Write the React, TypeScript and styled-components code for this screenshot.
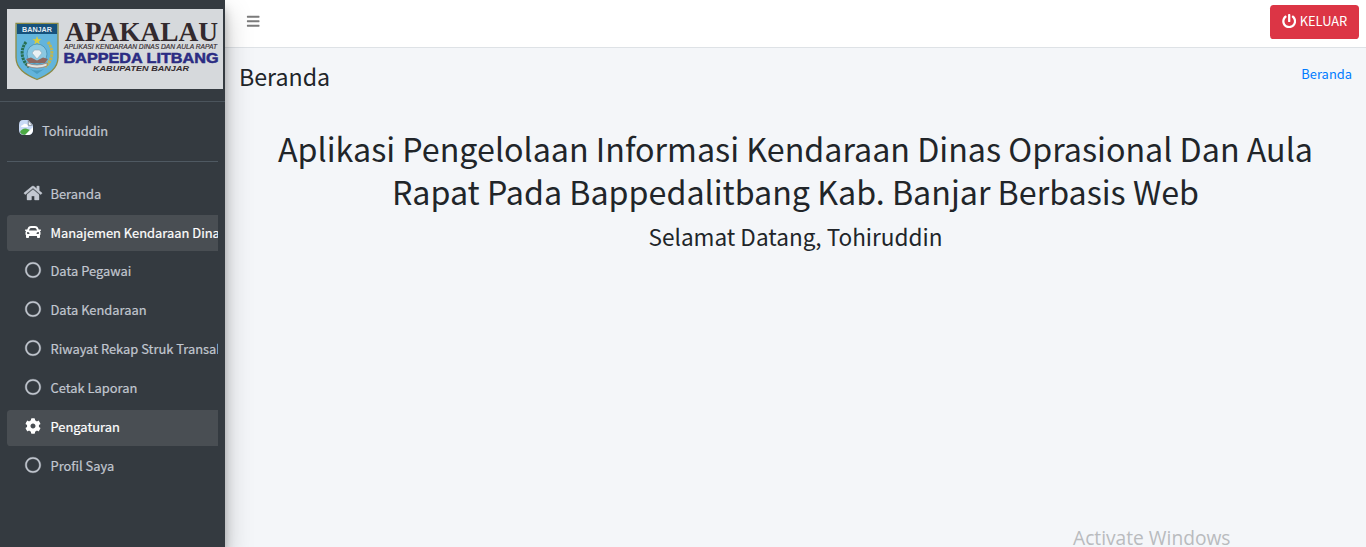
import React from 'react';
import styled, { createGlobalStyle, css } from 'styled-components';
import { FaHome, FaCar, FaCog, FaPowerOff, FaBars, FaRegCircle } from 'react-icons/fa';

const GlobalStyle = createGlobalStyle`
  *, *::before, *::after { box-sizing: border-box; }
  body {
    margin: 0;
    overflow: hidden;
    background: #f4f6f9;
    color: #212529;
    font-family: "Noto Sans CJK SC", "Open Sans", sans-serif;
    font-size: 12.9px;
  }
`;

const Shell = styled.div`
  display: flex;
  height: 547px;
`;

const Sidebar = styled.aside`
  position: relative;
  z-index: 2;
  flex: 0 0 225px;
  width: 225px;
  min-width: 0;
  background: #343a40;
  box-shadow: 0 12.6px 25.2px rgba(0, 0, 0, 0.25), 0 9px 9px rgba(0, 0, 0, 0.22);
`;

const Brand = styled.div`
  height: 102px;
  padding: 9px 2px 0 7px;
  border-bottom: 1px solid #4b545c;

  svg { display: block; }
`;

const SidebarBody = styled.div`
  padding: 0 7px;
`;

const UserPanel = styled.div`
  display: flex;
  height: 60px;
  padding: 18px 0 0 12px;
  gap: 9px;
  border-bottom: 1px solid #4f5962;
  color: #c2c7d0;

  svg { flex: none; }
`;

const UserName = styled.span`
  font-size: 12.9px;
  line-height: 22px;
  -webkit-text-stroke: 0.2px currentColor;
`;

const Menu = styled.nav`
  display: flex;
  flex-direction: column;
  gap: 3px;
  padding-top: 14px;
`;

const MenuItem = styled.a<{ $active?: boolean; $top?: boolean }>`
  display: flex;
  align-items: center;
  height: 36px;
  padding: 0 0 ${(p) => (p.$top ? 1 : 3)}px 15px;
  border-radius: 3.6px 0 0 3.6px;
  overflow: hidden;
  white-space: nowrap;
  font-size: 12.9px;
  color: #c2c7d0;
  -webkit-text-stroke: 0.2px currentColor;
  ${(p) => p.$active && css`
    background: #494e53;
    color: #fff;
  `}
`;

const MenuIcon = styled.span<{ $wide?: boolean; $bold?: boolean }>`
  display: flex;
  justify-content: center;
  flex: 0 0 22px;
  margin: 0 6.5px 1px 0;
  -webkit-text-stroke: 0;

  svg {
    width: ${(p) => (p.$wide ? 18 : 16)}px;
    height: 16px;
    overflow: visible;
    stroke-width: ${(p) => (p.$bold ? 12 : 0)}px;
  }
`;

const Main = styled.main`
  flex: 1;
  min-width: 0;
`;

const TopBar = styled.header`
  display: flex;
  align-items: center;
  justify-content: space-between;
  height: 48px;
  padding: 0 7px 4px 21px;
  background: #fff;
  border-bottom: 1px solid #dee2e6;
`;

const Toggle = styled.span`
  display: flex;
  font-size: 14.4px;
  color: #7b7b7b;
`;

const LogoutButton = styled.button`
  display: flex;
  align-items: center;
  justify-content: center;
  gap: 3.5px;
  width: 89px;
  height: 34px;
  padding: 0 0 1px;
  border: 0;
  border-radius: 3.6px;
  background: #dc3545;
  color: #fff;
  font: 12.9px/20px "Noto Sans CJK SC", sans-serif;
`;

const ContentHeader = styled.div`
  display: flex;
  justify-content: space-between;
  padding: 12px 14px 0 14px;
`;

const PageTitle = styled.h1`
  margin: 0;
  font-size: 23.2px;
  font-weight: 400;
  line-height: 32px;
`;

const Crumb = styled.a`
  font-size: 12.9px;
  line-height: 28px;
  color: #007bff;
`;

const Welcome = styled.section`
  padding: 35px 14px 0;
  text-align: center;
`;

const Headline = styled.h1`
  margin: 0;
  font-size: 32.22px;
  font-weight: 400;
  line-height: 43px;
`;

const Greeting = styled.h3`
  margin: 8px 0 0;
  font-size: 22.55px;
  font-weight: 400;
  line-height: 30px;
`;

const Watermark = styled.div`
  position: absolute;
  left: 1073px;
  top: 524px;
  font: 400 19.2px/28px "Open Sans", sans-serif;
  color: #b9bbbe;
  white-space: nowrap;
`;

const Logo = () => (
  <svg width="216" height="80" viewBox="0 0 216 80">
    <rect width="216" height="80" fill="#d6d9dc" />
    <path d="M9 14.500h42v34c0 11-9 17-21 22c-12-5-21-11-21-22z" fill="#62b4dc" stroke="#8c8b45" strokeWidth="1.300" />
    <path d="M10 15h40v10H10z" fill="#16527c" />
    <text x="15" y="23.300" textLength="30" lengthAdjust="spacingAndGlyphs" fontFamily="Liberation Sans" fontWeight="700" fontSize="7.500" fill="#e3edf2">BANJAR</text>
    <path d="M19 33c-6 8-5 18 3 25" fill="none" stroke="#287052" strokeWidth="3" strokeDasharray="2.500 .8" />
    <path d="M41 33c6 8 5 18-3 25" fill="none" stroke="#c0b64f" strokeWidth="3" strokeDasharray="2.500 .8" />
    <circle cx="30" cy="45" r="10" fill="#8ac8e2" stroke="#4289a7" strokeWidth=".7" />
    <path d="M30 27l1.200 3.200h3.300l-2.700 2 1 3.300-2.800-2-2.800 2 1-3.300-2.700-2h3.300z" fill="#d9cc3c" />
    <path d="M25 44l2.500-3h5l2.500 3-5 6z" fill="#e9f0f3" stroke="#8aa6b5" strokeWidth=".6" />
    <path d="M19 50l5-1.500 6 3 6-3 5 1.500-3 4H22z" fill="#8e6860" />
    <path d="M20 54q10 4 20 0v3q-10 4-20 0z" fill="#e1e5df" stroke="#8e6860" strokeWidth=".6" />
    <path d="M23 60q7 3 14 0l-7 5z" fill="#4a9cc0" />
    <g fill="#332a2e">
      <text x="58" y="32.200" textLength="153" lengthAdjust="spacingAndGlyphs" fontFamily="Liberation Serif" fontWeight="700" fontSize="27">APAKALAU</text>
      <text x="57" y="39.800" textLength="153" lengthAdjust="spacingAndGlyphs" fontFamily="Liberation Sans" fontStyle="italic" fontWeight="400" fontSize="6.500" stroke="#332a2e" strokeWidth=".15">APLIKASI KENDARAAN DINAS DAN AULA RAPAT</text>
      <text x="86" y="62.300" textLength="96" lengthAdjust="spacingAndGlyphs" fontFamily="Liberation Sans" fontStyle="italic" fontWeight="700" fontSize="6.500">KABUPATEN BANJAR</text>
    </g>
    <text x="56.500" y="54" textLength="155" lengthAdjust="spacingAndGlyphs" fontFamily="Liberation Sans" fontWeight="700" fontSize="14" fill="#2b2c83" stroke="#2b2c83" strokeWidth=".5">BAPPEDA LITBANG</text>
  </svg>
);

const MissingAvatar = () => (
  <svg width="14" height="15" viewBox="0 0 14 15">
    <path d="M4 0h5.500L14 5v5q0 5-5 5H5q-5 0-5-5V5Q0 0 4 0z" fill="#c9daf6" />
    <path d="M2 7q0-2 2-2 1-2 3-1 2 0 2 3z" fill="#fff" />
    <path d="M1 12q2-4 6-3.500l4 1.500-4 5q-5 0-6-3z" fill="#4ca944" />
    <path d="M6 15L14 7v3.500Q13 15 8 15z" fill="#fff" />
    <path d="M9.300.5v4.800h4.200z" fill="#f7f9fc" stroke="#68717d" strokeWidth=".7" />
  </svg>
);

const menu = [
  { label: 'Beranda', icon: FaHome, top: true, wide: true, bold: true },
  { label: 'Manajemen Kendaraan Dinas', icon: FaCar, top: true, active: true },
  { label: 'Data Pegawai', icon: FaRegCircle, bold: true },
  { label: 'Data Kendaraan', icon: FaRegCircle, bold: true },
  { label: 'Riwayat Rekap Struk Transaksi', icon: FaRegCircle, bold: true },
  { label: 'Cetak Laporan', icon: FaRegCircle, bold: true },
  { label: 'Pengaturan', icon: FaCog, active: true },
  { label: 'Profil Saya', icon: FaRegCircle, bold: true },
];

export default function App() {
  return (
    <>
      <GlobalStyle />
      <Shell>
        <Sidebar>
          <Brand><Logo /></Brand>
          <SidebarBody>
            <UserPanel>
              <MissingAvatar />
              <UserName>Tohiruddin</UserName>
            </UserPanel>
            <Menu>
              {menu.map(({ label, icon: Icon, active, top, wide, bold }) => (
                <MenuItem key={label} $active={active} $top={top}>
                  <MenuIcon $wide={wide} $bold={bold}><Icon /></MenuIcon>
                  {label}
                </MenuItem>
              ))}
            </Menu>
          </SidebarBody>
        </Sidebar>
        <Main>
          <TopBar>
            <Toggle><FaBars /></Toggle>
            <LogoutButton><FaPowerOff size={14.4} />KELUAR</LogoutButton>
          </TopBar>
          <ContentHeader>
            <PageTitle>Beranda</PageTitle>
            <Crumb>Beranda</Crumb>
          </ContentHeader>
          <Welcome>
            <Headline>
              Aplikasi Pengelolaan Informasi Kendaraan Dinas Oprasional Dan Aula<br />
              Rapat Pada Bappedalitbang Kab. Banjar Berbasis Web
            </Headline>
            <Greeting>Selamat Datang, Tohiruddin</Greeting>
          </Welcome>
        </Main>
      </Shell>
      <Watermark>Activate Windows</Watermark>
    </>
  );
}
